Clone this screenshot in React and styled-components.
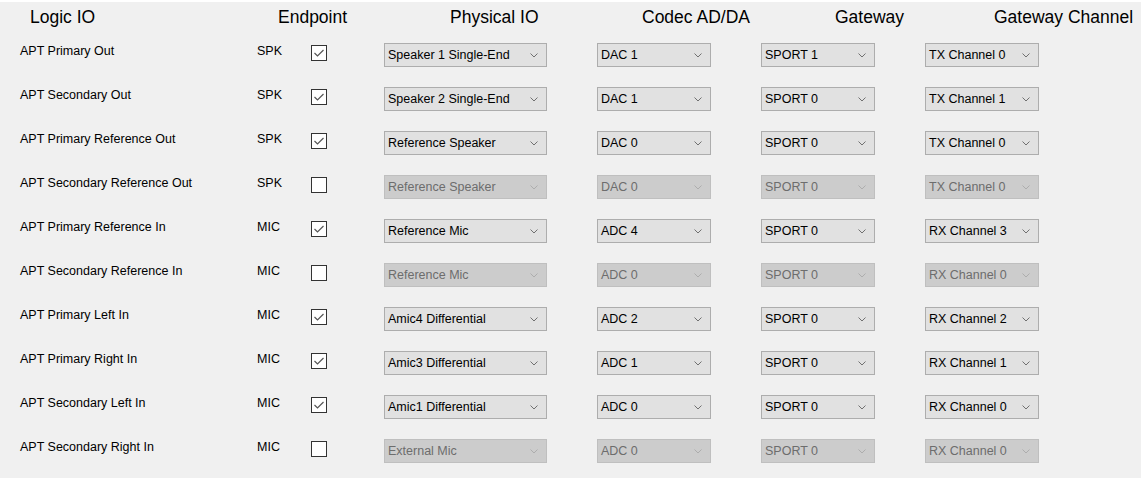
import React from 'react';
import styled, { createGlobalStyle } from 'styled-components';

const GlobalStyle = createGlobalStyle`
  html, body {
    margin: 0;
    padding: 0;
    background: #ffffff;
  }
  body {
    font-family: "Liberation Sans", Arial, sans-serif;
    overflow: hidden;
  }
`;

const Panel = styled.div`
  margin-top: 2px;
  width: 1141px;
  height: 476px;
  background: #f0f0f0;
  box-sizing: border-box;
`;

const HeaderRow = styled.div`
  display: grid;
  grid-template-columns: 248px 172px 192px 193px 159px auto;
  align-items: center;
  height: 31px;
  padding-left: 30px;
`;

const HeaderCell = styled.div`
  font-size: 17.5px;
  color: #000;
  white-space: nowrap;
`;

const Row = styled.div`
  display: grid;
  grid-template-columns: 237px 54px 73px 213px 164px 164px 114px;
  align-items: start;
  height: 44px;
  padding: 10px 0 0 20px;
  box-sizing: border-box;
`;

const Label = styled.div`
  font-size: 12.5px;
  line-height: 16px;
  color: #000;
  white-space: nowrap;
`;

const Box = styled.div`
  width: 16px;
  height: 16px;
  margin-top: 2px;
  box-sizing: border-box;
  border: 1px solid #333333;
  background: #ffffff;
  display: flex;
  align-items: center;
  justify-content: center;
`;

const Combo = styled.div`
  width: ${({ w }) => w}px;
  height: 24px;
  box-sizing: border-box;
  border: 1px solid ${({ disabled }) => (disabled ? '#bfbfbf' : '#adadad')};
  background: ${({ disabled }) => (disabled ? '#cccccc' : '#e1e1e1')};
  color: ${({ disabled }) => (disabled ? '#6d6d6d' : '#000000')};
  display: flex;
  align-items: center;
  justify-content: space-between;
  padding: 0 8px 0 3px;
  font-size: 12.5px;
  white-space: nowrap;
`;

const Chevron = ({ disabled }) => (
  <svg width="8" height="5" viewBox="0 0 8 5">
    <polyline
      points="0.5,0.5 4,4 7.5,0.5"
      fill="none"
      stroke={disabled ? '#adadad' : '#707070'}
      strokeWidth="1"
    />
  </svg>
);

const Check = () => (
  <svg width="14" height="14" viewBox="0 0 14 14">
    <polyline points="2.5,7 5.5,10 11.5,4" fill="none" stroke="#555" strokeWidth="1.2" />
  </svg>
);

const Select = ({ w, value, disabled }) => (
  <Combo w={w} disabled={disabled}>
    <span>{value}</span>
    <Chevron disabled={disabled} />
  </Combo>
);

const rows = [
  ['APT Primary Out', 'SPK', true, 'Speaker 1 Single-End', 'DAC 1', 'SPORT 1', 'TX Channel 0'],
  ['APT Secondary Out', 'SPK', true, 'Speaker 2 Single-End', 'DAC 1', 'SPORT 0', 'TX Channel 1'],
  ['APT Primary Reference Out', 'SPK', true, 'Reference Speaker', 'DAC 0', 'SPORT 0', 'TX Channel 0'],
  ['APT Secondary Reference Out', 'SPK', false, 'Reference Speaker', 'DAC 0', 'SPORT 0', 'TX Channel 0'],
  ['APT Primary Reference In', 'MIC', true, 'Reference Mic', 'ADC 4', 'SPORT 0', 'RX Channel 3'],
  ['APT Secondary Reference In', 'MIC', false, 'Reference Mic', 'ADC 0', 'SPORT 0', 'RX Channel 0'],
  ['APT Primary Left In', 'MIC', true, 'Amic4 Differential', 'ADC 2', 'SPORT 0', 'RX Channel 2'],
  ['APT Primary Right In', 'MIC', true, 'Amic3 Differential', 'ADC 1', 'SPORT 0', 'RX Channel 1'],
  ['APT Secondary Left In', 'MIC', true, 'Amic1 Differential', 'ADC 0', 'SPORT 0', 'RX Channel 0'],
  ['APT Secondary Right In', 'MIC', false, 'External Mic', 'ADC 0', 'SPORT 0', 'RX Channel 0'],
];

const App = () => (
  <>
    <GlobalStyle />
    <Panel>
      <HeaderRow>
        <HeaderCell>Logic IO</HeaderCell>
        <HeaderCell>Endpoint</HeaderCell>
        <HeaderCell>Physical IO</HeaderCell>
        <HeaderCell>Codec AD/DA</HeaderCell>
        <HeaderCell>Gateway</HeaderCell>
        <HeaderCell>Gateway Channel</HeaderCell>
      </HeaderRow>
      {rows.map(([name, type, on, phys, codec, gw, ch]) => (
        <Row key={name}>
          <Label>{name}</Label>
          <Label>{type}</Label>
          <Box>{on && <Check />}</Box>
          <Select w={163} value={phys} disabled={!on} />
          <Select w={114} value={codec} disabled={!on} />
          <Select w={114} value={gw} disabled={!on} />
          <Select w={114} value={ch} disabled={!on} />
        </Row>
      ))}
    </Panel>
  </>
);

export default App;
